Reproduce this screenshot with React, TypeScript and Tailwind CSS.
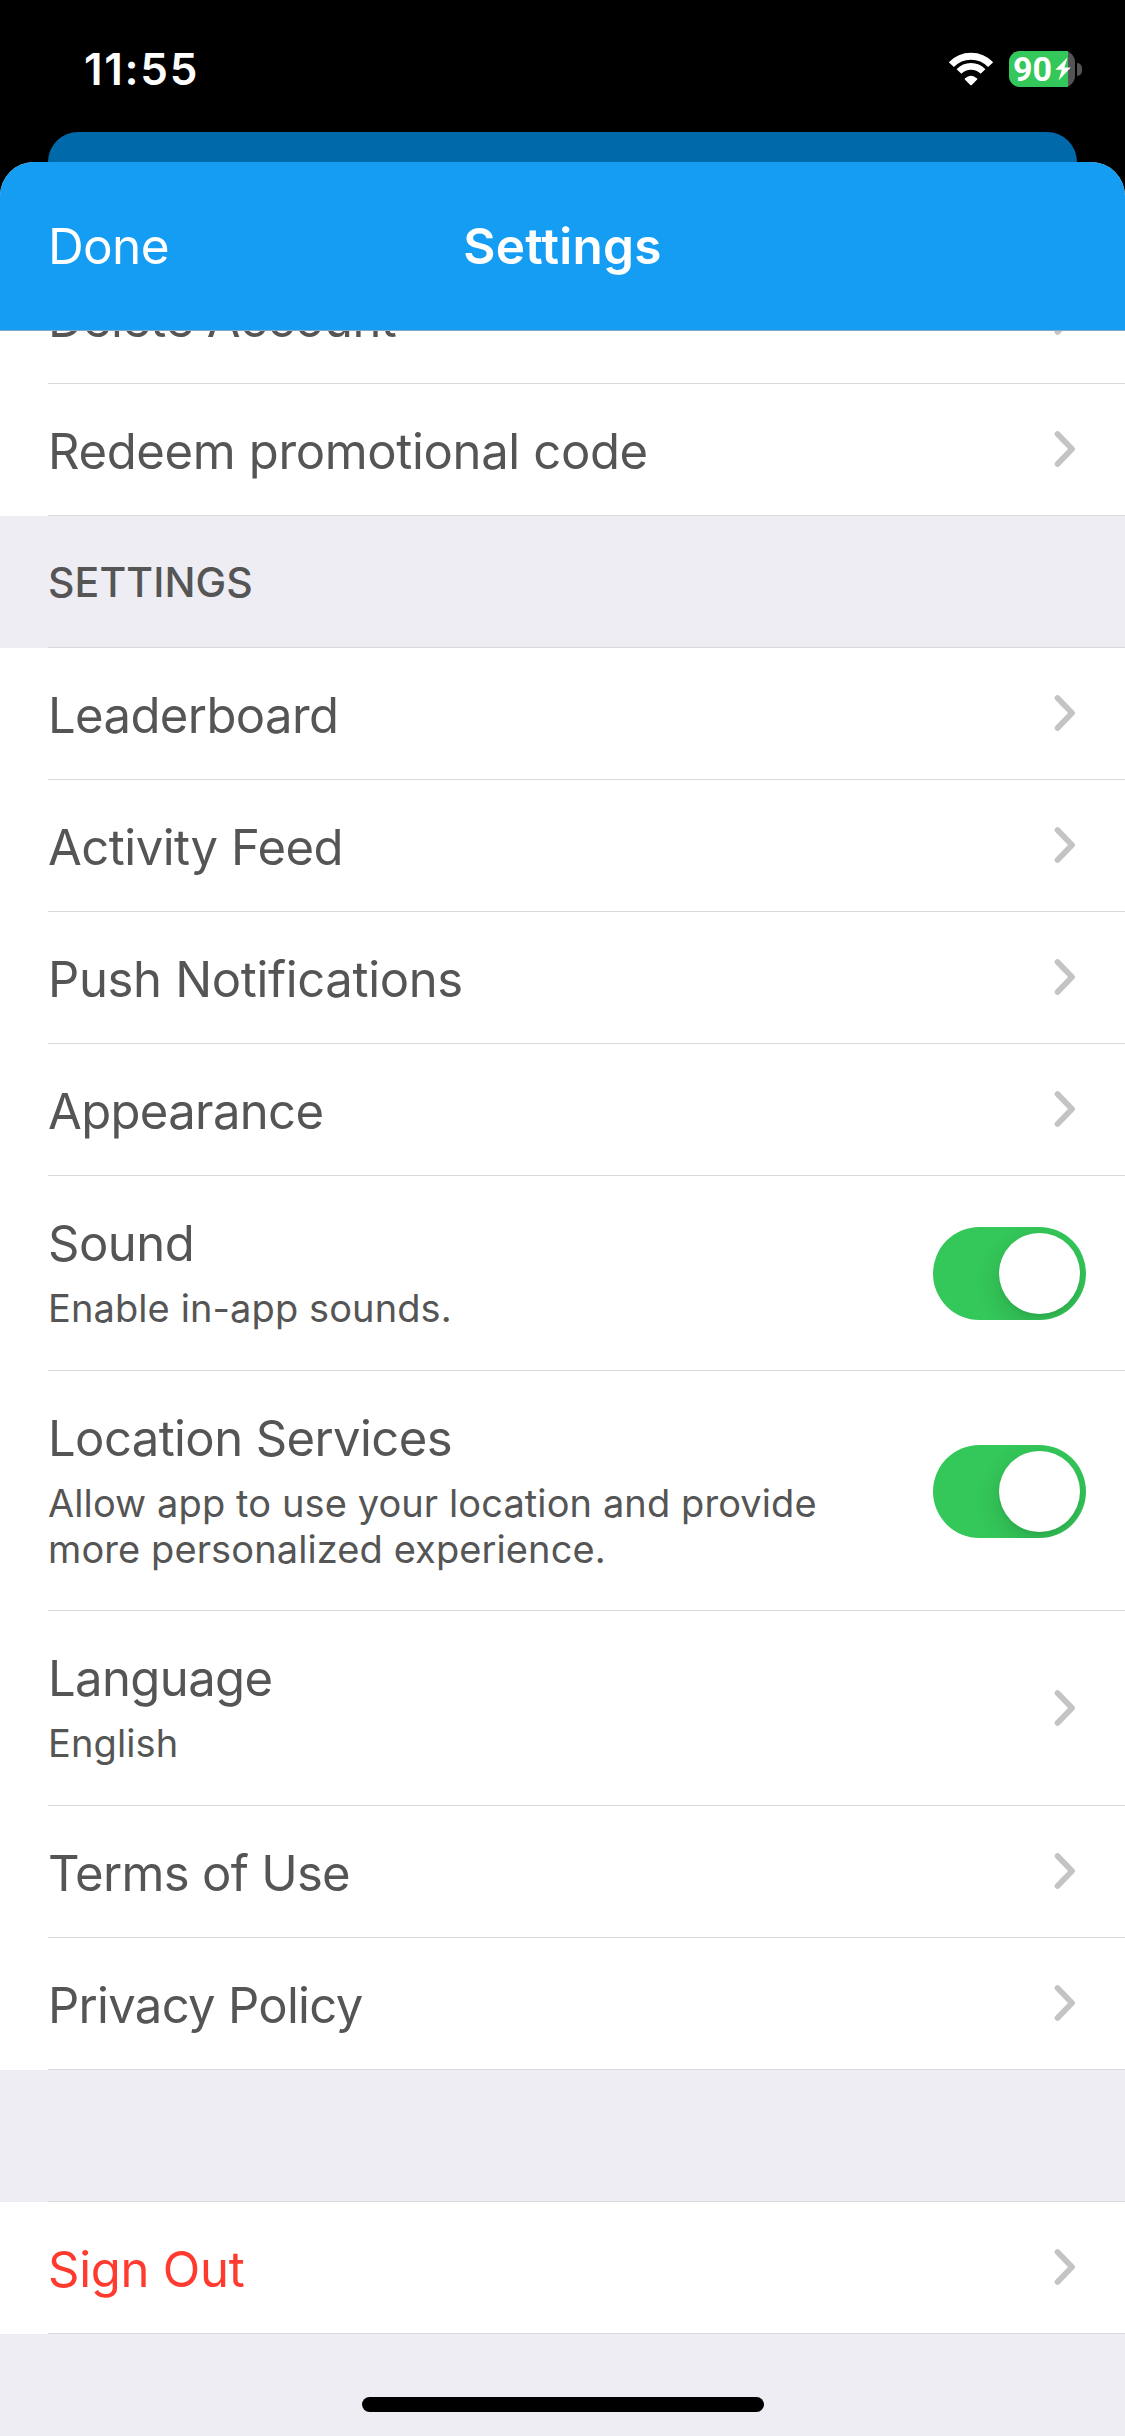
import clsx from 'clsx'

interface SettingsItem {
  title: string
  description?: string
  kind?: 'link' | 'toggle'
  danger?: boolean
  height?: string
  tracking?: string
}

const accountItems: SettingsItem[] = [
  { title: 'Delete Account' },
  { title: 'Redeem promotional code', tracking: 'tracking-[-0.35px]' },
]

const settingsItems: SettingsItem[] = [
  { title: 'Leaderboard', tracking: 'tracking-[-0.6px]' },
  { title: 'Activity Feed' },
  { title: 'Push Notifications', tracking: 'tracking-[-0.35px]' },
  { title: 'Appearance', tracking: 'tracking-[-0.65px]' },
  { title: 'Sound', description: 'Enable in-app sounds.', kind: 'toggle', height: 'h-[195px]' },
  {
    title: 'Location Services',
    description: 'Allow app to use your location and provide more personalized experience.',
    kind: 'toggle',
    height: 'h-[240px]',
    tracking: 'tracking-[-0.6px]',
  },
  { title: 'Language', description: 'English', height: 'h-[195px]', tracking: 'tracking-[-0.6px]' },
  { title: 'Terms of Use', tracking: 'tracking-[-0.7px]' },
  { title: 'Privacy Policy', tracking: 'tracking-[-0.7px]' },
]

function WifiIcon() {
  return (
    <svg className="h-[34px] w-[46px]" viewBox="23 35 138 102" fill="none">
      <path d="M33 73 A81 81 0 0 1 151 73" stroke="#fff" strokeWidth="21" />
      <path d="M56 93.5 A50 50 0 0 1 128 93.5" stroke="#fff" strokeWidth="20" />
      <path
        d="M92 133 L75 116 Q92 100 109 116 Z"
        fill="#fff"
        stroke="#fff"
        strokeWidth="4"
        strokeLinejoin="round"
      />
    </svg>
  )
}

function Battery() {
  return (
    <div className="flex items-center gap-0.5">
      <div className="relative flex h-9 w-[66px] items-center rounded-[11px] bg-[#545456]">
        <div className="absolute inset-y-0 left-0 w-[59px] rounded-l-[11px] bg-[#34c759]" />
        <span className="relative pl-1 font-[Roboto,sans-serif] text-[34px] leading-9 font-bold text-white">
          90
        </span>
        <svg className="absolute top-[6px] left-[46px] h-6 w-4" viewBox="0 0 16 24">
          <path d="M12.5 0.5 L0.3 12.7 H6.8 L3.5 23.5 L15.8 10.5 H9.4 Z" fill="#fff" />
        </svg>
      </div>
      <div className="h-[13px] w-[5px] rounded-r-full bg-[#545456]" />
    </div>
  )
}

function StatusBar() {
  return (
    <div className="flex h-[132px] justify-between pr-[43px] pl-[84px]">
      <span className="mt-[39px] text-[44px] leading-[60px] font-semibold tracking-[1.7px] text-white">
        11:55
      </span>
      <div className="mt-[51px] flex h-9 items-center gap-[15px]">
        <WifiIcon />
        <Battery />
      </div>
    </div>
  )
}

function Chevron() {
  return (
    <svg className="mr-px mb-px h-[38px] w-[22px]" viewBox="0 0 22 38" fill="none">
      <path
        d="M3.5 4 L18 19 L3.5 34"
        stroke="#c4c4c6"
        strokeWidth="5.8"
        strokeLinecap="round"
        strokeLinejoin="round"
      />
    </svg>
  )
}

function Toggle() {
  return (
    <button
      role="switch"
      aria-checked="true"
      className="mt-px flex h-[93px] w-[153px] items-center justify-end overflow-hidden rounded-full bg-[#34c759] p-1.5"
    >
      <span className="size-[81px] rounded-full bg-white shadow-[0_9px_24px_rgba(0,0,0,0.15),0_3px_3px_rgba(0,0,0,0.04)]" />
    </button>
  )
}

function SettingsRow({ title, description, kind = 'link', danger, height, tracking }: SettingsItem) {
  return (
    <li className={clsx('bg-white pl-12', height ?? 'h-[132px]')}>
      <div
        className={clsx(
          'flex h-full items-center justify-between border-b border-[#d9d9db]',
          kind === 'toggle' ? 'pr-[39px]' : 'pr-12',
        )}
      >
        <div className="w-[800px] self-start pt-[38px]">
          <h3
            className={clsx(
              'text-[49px] leading-[60px]',
              tracking ?? 'tracking-[-0.5px]',
              danger ? 'text-[#ff3b30]' : 'text-[#555]',
            )}
          >
            {title}
          </h3>
          {description && (
            <p className="mt-[11px] text-[38px] leading-[46px] tracking-[0.1px] text-[#555]">
              {description}
            </p>
          )}
        </div>
        {kind === 'toggle' ? <Toggle /> : <Chevron />}
      </div>
    </li>
  )
}

function SectionHeader({ title }: { title?: string }) {
  return (
    <div className="h-[132px] bg-[#eeedf4] pl-12">
      <div className="flex h-full items-center border-b border-[#d9d9db] pt-0.5">
        <h2 className="text-[41px] font-medium tracking-[0.1px] text-[#555]">{title}</h2>
      </div>
    </div>
  )
}

export default function App() {
  return (
    <div className="flex h-[2436px] w-[1125px] flex-col overflow-hidden bg-black font-[Inter,'Liberation_Sans',sans-serif]">
      <StatusBar />
      {/* card peeking out behind the sheet */}
      <div className="mx-12 h-[70px] shrink-0 rounded-t-[30px] bg-[#0069aa]" />
      <div className="relative -mt-10 flex flex-1 flex-col overflow-hidden rounded-t-[34px] bg-[#eeedf4]">
        <header className="relative z-10 grid h-[169px] shrink-0 grid-cols-3 items-center border-b border-[#7fa9c9] bg-[#149df3] px-12 text-[49.5px] text-white">
          <button className="text-left tracking-[-0.65px]">Done</button>
          <h1 className="text-center font-semibold tracking-[0.28px]">Settings</h1>
        </header>

        {/* list is scrolled so the first row sits partly under the header */}
        <main className="-mt-[79px] flex-1">
          <ul>
            {accountItems.map((item) => (
              <SettingsRow key={item.title} {...item} />
            ))}
          </ul>
          <SectionHeader title="SETTINGS" />
          <ul>
            {settingsItems.map((item) => (
              <SettingsRow key={item.title} {...item} />
            ))}
          </ul>
          <SectionHeader />
          <ul>
            <SettingsRow title="Sign Out" danger tracking="tracking-[-0.25px]" />
          </ul>
        </main>

        <div className="absolute bottom-6 left-1/2 h-[15px] w-[402px] -translate-x-1/2 rounded-full bg-black" />
      </div>
    </div>
  )
}
